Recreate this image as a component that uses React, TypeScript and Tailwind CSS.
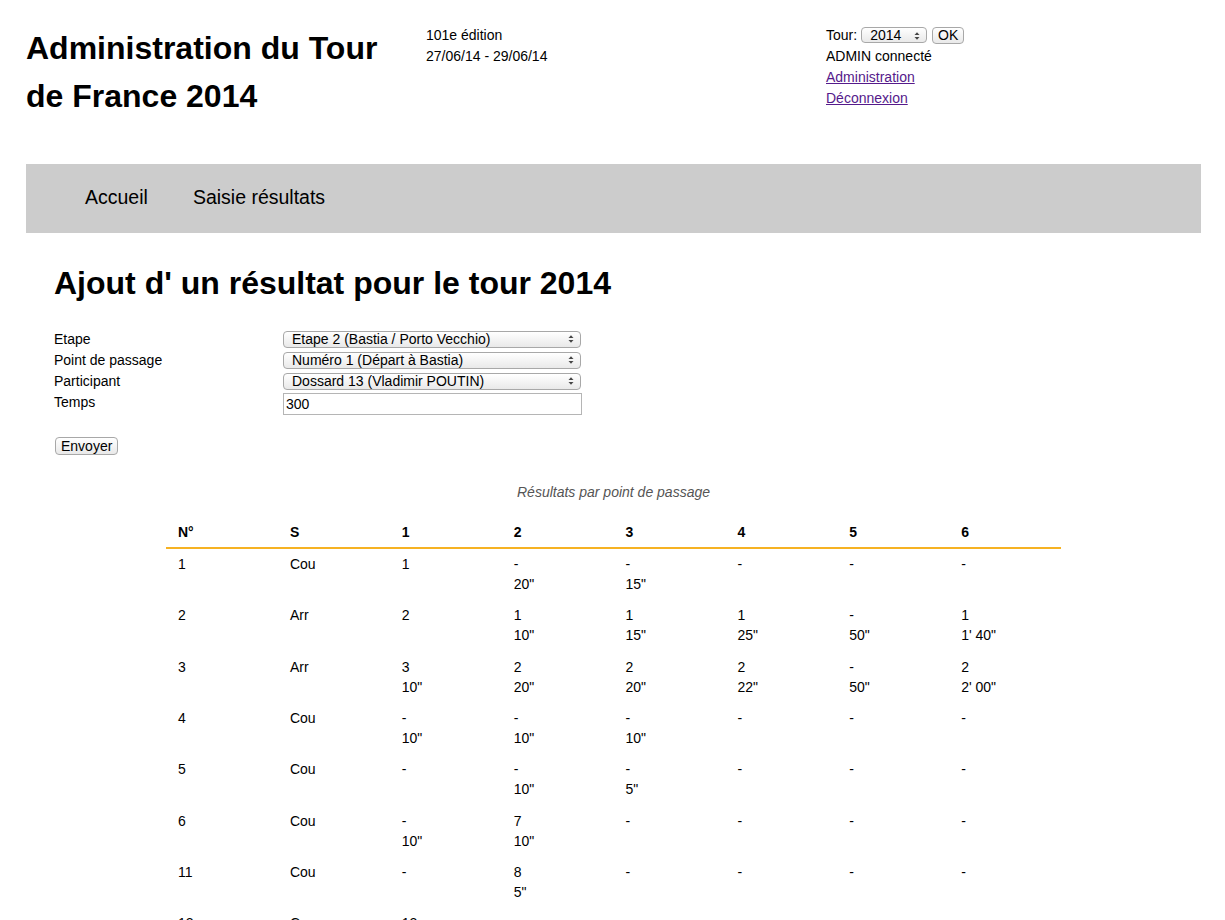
import React from "react";

type Row = { num: string; status: string; cells: [string, string?][] };

const rows: Row[] = [
  { num: "1", status: "Cou", cells: [["1"], ["-", '20"'], ["-", '15"'], ["-"], ["-"], ["-"]] },
  { num: "2", status: "Arr", cells: [["2"], ["1", '10"'], ["1", '15"'], ["1", '25"'], ["-", '50"'], ["1", "1' 40\""]] },
  { num: "3", status: "Arr", cells: [["3", '10"'], ["2", '20"'], ["2", '20"'], ["2", '22"'], ["-", '50"'], ["2", "2' 00\""]] },
  { num: "4", status: "Cou", cells: [["-", '10"'], ["-", '10"'], ["-", '10"'], ["-"], ["-"], ["-"]] },
  { num: "5", status: "Cou", cells: [["-"], ["-", '10"'], ["-", '5"'], ["-"], ["-"], ["-"]] },
  { num: "6", status: "Cou", cells: [["-", '10"'], ["7", '10"'], ["-"], ["-"], ["-"], ["-"]] },
  { num: "11", status: "Cou", cells: [["-"], ["8", '5"'], ["-"], ["-"], ["-"], ["-"]] },
  { num: "12", status: "Cou", cells: [["12"], ["-"], ["-"], ["-"], ["-"], ["-"]] },
];

// little up/down arrows drawn by the mac select
function Arrows() {
  return (
    <svg width="6" height="9" viewBox="0 0 6 9" className="absolute right-[7px] top-1/2 -translate-y-1/2 pointer-events-none">
      <path d="M0.5 3.5 L3 0.8 L5.5 3.5 Z" fill="#444" />
      <path d="M0.5 5.5 L3 8.2 L5.5 5.5 Z" fill="#444" />
    </svg>
  );
}

function Select({ value, width }: { value: string; width: string }) {
  return (
    <div className={`relative ${width}`}>
      <select
        defaultValue={value}
        className="appearance-none w-full h-[17px] pl-[8px] pr-[18px] text-[14px] leading-[15px] border border-[#a8a8a8] rounded-[4px] bg-gradient-to-b from-white to-[#e9e9e9] text-black outline-none"
      >
        <option>{value}</option>
      </select>
      <Arrows />
    </div>
  );
}

export default function App() {
  return (
    <div className="font-['Liberation_Sans',Arial,Helvetica,sans-serif] text-[14px] text-black bg-white min-h-screen">
      <div className="ml-[26px] mr-[24px]">
        {/* header */}
        <div className="flex pt-[24px]">
          <h1 className="w-[400px] text-[32px] font-bold leading-[48px]">
            Administration du Tour
            <br />
            de France 2014
          </h1>
          <div className="w-[400px] pt-[1px] leading-[21px]">
            <div>101e édition</div>
            <div>27/06/14 - 29/06/14</div>
          </div>
          <div className="pt-[1px] leading-[21px]">
            <div className="flex items-center h-[21px]">
              <span>Tour:</span>
              <div className="relative ml-[4px] w-[66px]">
                <select
                  defaultValue="2014"
                  className="appearance-none w-full h-[16px] pl-[8px] text-[14px] leading-[14px] border border-[#a8a8a8] rounded-[4px] bg-gradient-to-b from-white to-[#e9e9e9] outline-none"
                >
                  <option>2014</option>
                </select>
                <Arrows />
              </div>
              <button className="ml-[5px] h-[17px] w-[32px] text-[14px] leading-[15px] border border-[#a8a8a8] rounded-[4px] bg-gradient-to-b from-white to-[#e9e9e9]">
                OK
              </button>
            </div>
            <div>ADMIN connecté</div>
            <div>
              <a href="#" className="text-[#551a8b] underline">Administration</a>
            </div>
            <div>
              <a href="#" className="text-[#551a8b] underline">Déconnexion</a>
            </div>
          </div>
        </div>

        {/* nav */}
        <nav className="mt-[44px] h-[69px] bg-[#cccccc] flex items-center pl-[59px] gap-[45px] text-[19.5px] pb-[1px]">
          <a href="#">Accueil</a>
          <a href="#">Saisie résultats</a>
        </nav>

        <div className="px-[28px]">
          <h2 className="mt-[31.5px] text-[32px] font-bold leading-[37px]">
            Ajout d' un résultat pour le tour 2014
          </h2>

          <form className="mt-[27px]" onSubmit={e => e.preventDefault()}>
            <div className="flex items-center h-[21px]">
              <label className="w-[229px]">Etape</label>
              <Select value="Etape 2 (Bastia / Porto Vecchio)" width="w-[298px]" />
            </div>
            <div className="flex items-center h-[21px]">
              <label className="w-[229px]">Point de passage</label>
              <Select value="Numéro 1 (Départ à Bastia)" width="w-[298px]" />
            </div>
            <div className="flex items-center h-[21px]">
              <label className="w-[229px]">Participant</label>
              <Select value="Dossard 13 (Vladimir POUTIN)" width="w-[298px]" />
            </div>
            <div className="flex items-start">
              <label className="w-[229px] leading-[21px]">Temps</label>
              <input
                type="text"
                defaultValue="300"
                className="mt-[1.5px] w-[299px] h-[22px] px-[2px] border border-[#b5b5b5] text-[14px] outline-none"
              />
            </div>
            <button
              type="submit"
              className="mt-[22px] ml-[1px] h-[18px] px-[5px] text-[14px] leading-[16px] border border-[#a8a8a8] rounded-[4px] bg-gradient-to-b from-white to-[#e9e9e9]"
            >
              Envoyer
            </button>
          </form>

          <table className="mt-[25px] mx-auto w-[895px] table-fixed border-collapse">
            <caption className="italic text-[#555555] leading-[20px] pb-[14px]">
              Résultats par point de passage
            </caption>
            <thead>
              <tr>
                {["N°", "S", "1", "2", "3", "4", "5", "6"].map(h => (
                  <th
                    key={h}
                    className="text-left font-bold pl-[12px] pt-[6px] pb-[5px] leading-[20px] border-b-2 border-[#f6b223]"
                  >
                    {h}
                  </th>
                ))}
              </tr>
            </thead>
            <tbody>
              {rows.map(r => (
                <tr key={r.num}>
                  <td className="align-top pl-[12px] pt-[5px] pb-[6.33px] leading-[20px] h-[51.33px]">{r.num}</td>
                  <td className="align-top pl-[12px] pt-[5px] pb-[6.33px] leading-[20px]">{r.status}</td>
                  {r.cells.map((c, i) => (
                    <td key={i} className="align-top pl-[12px] pt-[5px] pb-[6.33px] leading-[20px]">
                      <div>{c[0]}</div>
                      {c[1] && <div>{c[1]}</div>}
                    </td>
                  ))}
                </tr>
              ))}
            </tbody>
          </table>
        </div>
      </div>
    </div>
  );
}
